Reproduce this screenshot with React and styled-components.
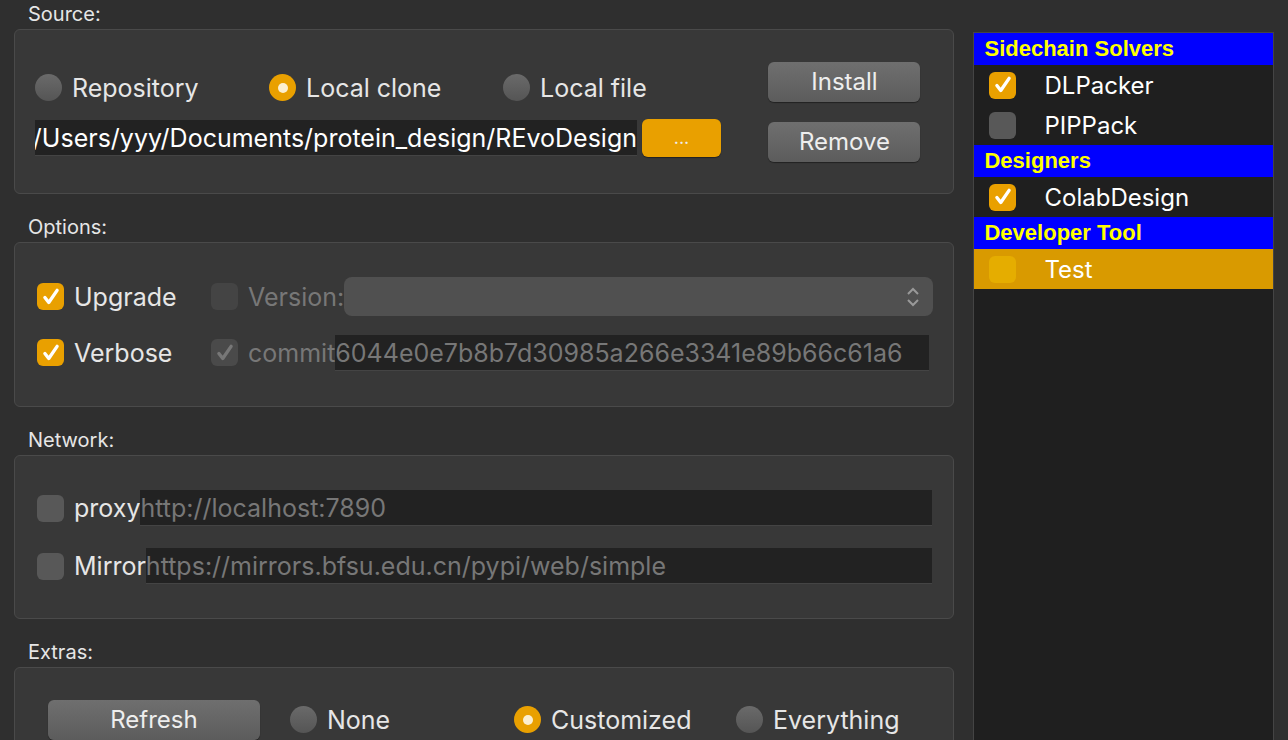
import React from 'react';
import styled, { createGlobalStyle } from 'styled-components';

const orange = '#e9a000';
const Global = createGlobalStyle`
  html, body { margin: 0; background: #2f2f2f; }
  body { font-family: Inter, "Liberation Sans", sans-serif; color: #e6e6e6; }
`;

const Page = styled.div`
  width: 1288px; height: 740px; overflow: hidden;
  display: flex; gap: 19px; padding: 0 14px 0 14px; box-sizing: border-box;
`;
const Left = styled.div`width: 942px; display: flex; flex-direction: column;`;
const Label = styled.div`font-size: 20px; padding-left: 14px; height: 29px; line-height: 28px; flex-shrink: 0; margin-top: ${p => p.$mt || 0}px;`;
const Group = styled.div`
  background: #383838; border: 1px solid #4a4a4a; border-radius: 6px; flex-shrink: 0;
  height: ${p => p.$h}px; box-sizing: border-box; padding: ${p => p.$pad || '0 20px 0 22px'};
  display: flex; flex-direction: column; justify-content: center; gap: ${p => p.$gap || 0}px;
`;
const Row = styled.div`display: flex; align-items: center; gap: ${p => p.$gap || 0}px; height: ${p => p.$h || 40}px;`;
const Item = styled.label`display: flex; align-items: center; gap: 10px; font-size: 25px; width: ${p => p.$w ? p.$w + 'px' : 'auto'}; color: ${p => p.$dim ? '#777' : '#e6e6e6'}; flex-shrink: 0;`;
const Radio = styled.span`
  width: 27px; height: 27px; border-radius: 50%; flex-shrink: 0; box-sizing: border-box;
  background: ${p => p.$on ? orange : 'linear-gradient(#6a6a6a,#555)'};
  display: flex; align-items: center; justify-content: center;
  &::after { content: ''; width: 10px; height: 10px; border-radius: 50%; background: #fcefd0; display: ${p => p.$on ? 'block' : 'none'}; }
`;
const Box = styled.span`
  width: 27px; height: 27px; border-radius: 6px; flex-shrink: 0;
  background: ${p => p.$on ? (p.$dim ? '#4a4a4a' : orange) : p.$dim ? '#444' : '#585858'};
  display: flex; align-items: center; justify-content: center;
`;
const Check = ({ dim }) => (
  <svg width="20" height="20" viewBox="0 0 18 18"><path d="M3.5 9.5l3.5 4.5 7.5-11" fill="none" stroke={dim ? '#777' : '#fff'} strokeWidth="3" strokeLinecap="round" strokeLinejoin="round" /></svg>
);
const CheckBox = ({ on, dim }) => <Box $on={on} $dim={dim}>{on && <Check dim={dim} />}</Box>;
const Button = styled.button`
  width: ${p => p.$w}px; height: 40px; border: none; border-radius: 6px;
  background: ${p => p.$accent ? orange : 'linear-gradient(#6f6f6f,#5c5c5c)'};
  color: #eee; font: inherit; font-size: 24px; flex-shrink: 0; box-shadow: 0 1px 1px rgba(0,0,0,.4);
`;
const Field = styled.div`
  background: #222; height: 36px; width: ${p => p.$w}px; font-size: 25px; line-height: 36px;
  color: ${p => p.$c || '#777'}; white-space: nowrap; overflow: hidden; box-sizing: border-box; flex-shrink: 0;
  border-bottom: 1px solid #444; display: flex; justify-content: ${p => p.$end ? 'flex-end' : 'flex-start'};
`;
const Select = styled.div`
  flex: 1; height: 39px; background: #505050; border-radius: 8px; display: flex; justify-content: flex-end; align-items: center; padding-right: 12px;
`;
const SideCol = styled.div`display: flex; flex-direction: column; gap: 20px;`;
const List = styled.div`width: 299px; margin-top: 32px; background: #1f1f1f; border: 1px solid #444; border-bottom: none; display: flex; flex-direction: column;`;
const Head = styled.div`background: #0000ff; color: #ffff00; font-weight: 800; font-size: 22px; height: 32px; line-height: 32px; padding-left: 10px; font-family: "Liberation Sans", Arial, sans-serif;`;
const LItem = styled.div`height: 40px; display: flex; align-items: center; padding-left: 15px; gap: 28px; font-size: 24px; color: #fff; background: ${p => p.$sel ? '#d99a00' : 'transparent'};`;

export default function App() {
  return (
    <Page>
      <Global />
      <Left>
        <Label>Source:</Label>
        <Group $h={165} $pad="0 33px 0 20px">
          <div style={{ display: 'flex', alignItems: 'center' }}>
            <div style={{ flex: 1, display: 'flex', flexDirection: 'column', gap: 8 }}>
              <Row $h={44}>
                <Item $w={234}><Radio />Repository</Item>
                <Item $w={234}><Radio $on />Local clone</Item>
                <Item><Radio />Local file</Item>
              </Row>
              <Row $gap={5}>
                <Field $w={602} $c="#fff" $end><span style={{ flexShrink: 0 }}>/Users/yyy/Documents/protein_design/REvoDesign</span></Field>
                <Button $w={79} $accent style={{ height: 38, fontSize: 18 }}>...</Button>
              </Row>
            </div>
            <SideCol>
              <Button $w={152}>Install</Button>
              <Button $w={152}>Remove</Button>
            </SideCol>
          </div>
        </Group>
        <Label $mt={19}>Options:</Label>
        <Group $h={165} $gap={16} $pad="0 20px 0 22px">
          <Row $gap={0}>
            <Item $w={174}><CheckBox on />Upgrade</Item>
            <Item $dim style={{ gap: 10 }}><CheckBox dim />Version:</Item>
            <Select>
              <svg width="16" height="24" viewBox="0 0 16 24"><path d="M3 9l5-5 5 5M3 15l5 5 5-5" fill="none" stroke="#999" strokeWidth="2" /></svg>
            </Select>
          </Row>
          <Row>
            <Item $w={174}><CheckBox on />Verbose</Item>
            <Item $dim style={{ gap: 10 }}><CheckBox on dim />commit</Item>
            <Field $w={594}>6044e0e7b8b7d30985a266e3341e89b66c61a6</Field>
          </Row>
        </Group>
        <Label $mt={19}>Network:</Label>
        <Group $h={164} $gap={22}>
          <Row $h={36}><Item style={{ gap: 10 }}><CheckBox />proxy</Item><Field $w={792}>http://localhost:7890</Field></Row>
          <Row $h={36}><Item style={{ gap: 10 }}><CheckBox />Mirror</Item><Field $w={786}>https://mirrors.bfsu.edu.cn/pypi/web/simple</Field></Row>
        </Group>
        <Label $mt={19}>Extras:</Label>
        <Group $h={105} $pad="0 20px 0 33px">
          <Row>
            <Button $w={212} style={{ marginRight: 30 }}>Refresh</Button>
            <Item $w={224}><Radio />None</Item>
            <Item $w={222}><Radio $on />Customized</Item>
            <Item><Radio />Everything</Item>
          </Row>
        </Group>
      </Left>
      <List>
        <Head>Sidechain Solvers</Head>
        <LItem><CheckBox on />DLPacker</LItem>
        <LItem><CheckBox />PIPPack</LItem>
        <Head>Designers</Head>
        <LItem><CheckBox on />ColabDesign</LItem>
        <Head>Developer Tool</Head>
        <LItem $sel><Box style={{ background: '#e5ad00' }} />Test</LItem>
      </List>
    </Page>
  );
}
